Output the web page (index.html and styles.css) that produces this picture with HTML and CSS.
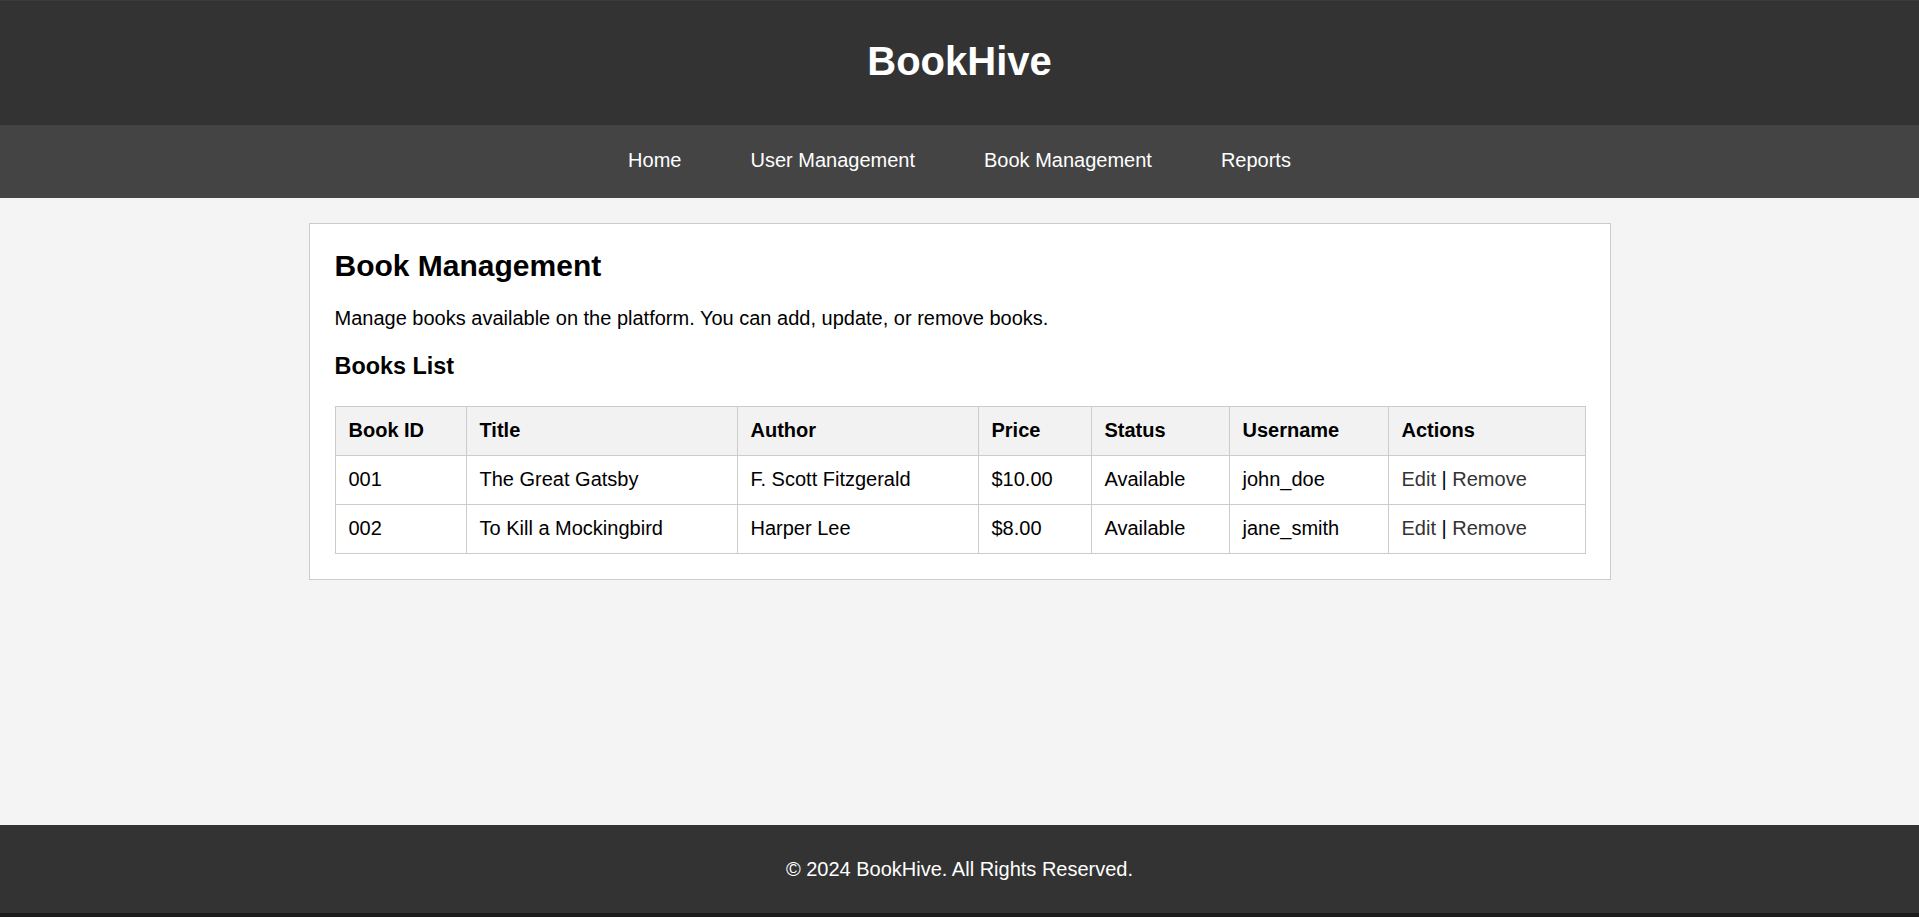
FILE: index.html
```html
<!DOCTYPE html>
<html lang="en">
<head>
<meta charset="utf-8">
<title>BookHive - Book Management</title>
<link rel="stylesheet" href="styles.css">
</head>
<body>
<header class="site-header">
  <h1 class="brand">BookHive</h1>
</header>
<nav class="site-nav">
  <a href="#" class="nav-link">Home</a>
  <a href="#" class="nav-link">User Management</a>
  <a href="#" class="nav-link">Book Management</a>
  <a href="#" class="nav-link">Reports</a>
</nav>
<main class="main">
  <section class="card">
    <h2 class="card-title">Book Management</h2>
    <p class="card-text">Manage books available on the platform. You can add, update, or remove books.</p>
    <h3 class="card-subtitle">Books List</h3>
    <table class="books">
      <colgroup>
        <col class="c-id">
        <col class="c-title">
        <col class="c-author">
        <col class="c-price">
        <col class="c-status">
        <col class="c-user">
        <col class="c-actions">
      </colgroup>
      <thead>
        <tr>
          <th>Book ID</th>
          <th>Title</th>
          <th>Author</th>
          <th>Price</th>
          <th>Status</th>
          <th>Username</th>
          <th>Actions</th>
        </tr>
      </thead>
      <tbody>
        <tr>
          <td>001</td>
          <td>The Great Gatsby</td>
          <td>F. Scott Fitzgerald</td>
          <td>$10.00</td>
          <td>Available</td>
          <td>john_doe</td>
          <td><a href="#" class="action">Edit</a> | <a href="#" class="action">Remove</a></td>
        </tr>
        <tr>
          <td>002</td>
          <td>To Kill a Mockingbird</td>
          <td>Harper Lee</td>
          <td>$8.00</td>
          <td>Available</td>
          <td>jane_smith</td>
          <td><a href="#" class="action">Edit</a> | <a href="#" class="action">Remove</a></td>
        </tr>
      </tbody>
    </table>
  </section>
</main>
<footer class="site-footer">
  <p class="footer-text">&copy; 2024 BookHive. All Rights Reserved.</p>
</footer>
</body>
</html>
```

FILE: styles.css
```css
* {
  box-sizing: border-box;
}

html, body {
  margin: 0;
  padding: 0;
}

body {
  font-family: "Liberation Sans", Arial, sans-serif;
  font-size: 20px;
  color: #000;
  background: #f4f4f4;
  min-height: 100vh;
  display: flex;
  flex-direction: column;
}

.site-header {
  background: #333;
  border-top: 1px solid #3a3a42;
  padding: 37px 0 41px;
  text-align: center;
}

.brand {
  margin: 0;
  color: #fff;
  font-size: 40px;
  line-height: 46px;
  font-weight: bold;
}

.site-nav {
  background: #444;
  padding: 24px 0 26px;
  display: flex;
  justify-content: center;
  gap: 69px;
}

.nav-link {
  color: #fff;
  text-decoration: none;
  font-size: 20px;
  line-height: 23px;
}

.main {
  flex: 1;
  padding-top: 25px;
}

.card {
  width: 1302px;
  margin: 0 auto;
  background: #fff;
  border: 1px solid #ccc;
  padding: 25px;
}

.card-title {
  margin: 0 0 23px;
  font-size: 30px;
  line-height: 34.5px;
  font-weight: bold;
}

.card-text {
  margin: 0 0 23px;
  font-size: 20px;
  line-height: 23px;
}

.card-subtitle {
  margin: 0 0 26px;
  font-size: 23.4px;
  line-height: 27px;
  font-weight: bold;
}

.books {
  width: 100%;
  border-collapse: collapse;
  table-layout: fixed;
}

.c-id { width: 131px; }
.c-title { width: 271px; }
.c-author { width: 241px; }
.c-price { width: 113px; }
.c-status { width: 138px; }
.c-user { width: 159px; }
.c-actions { width: 197px; }

.books th,
.books td {
  border: 1px solid #ccc;
  padding: 12.5px 13px;
  text-align: left;
  font-size: 20px;
  line-height: 23px;
  white-space: nowrap;
}

.books th {
  background: #f2f2f2;
  font-weight: bold;
}

.action {
  color: #333;
  text-decoration: none;
}

.site-footer {
  background: #333;
  color: #fff;
  text-align: center;
  padding: 33px 0 32px;
  border-bottom: 4px solid #1c1c1c;
}

.footer-text {
  margin: 0;
  font-size: 20px;
  line-height: 23px;
}
```
